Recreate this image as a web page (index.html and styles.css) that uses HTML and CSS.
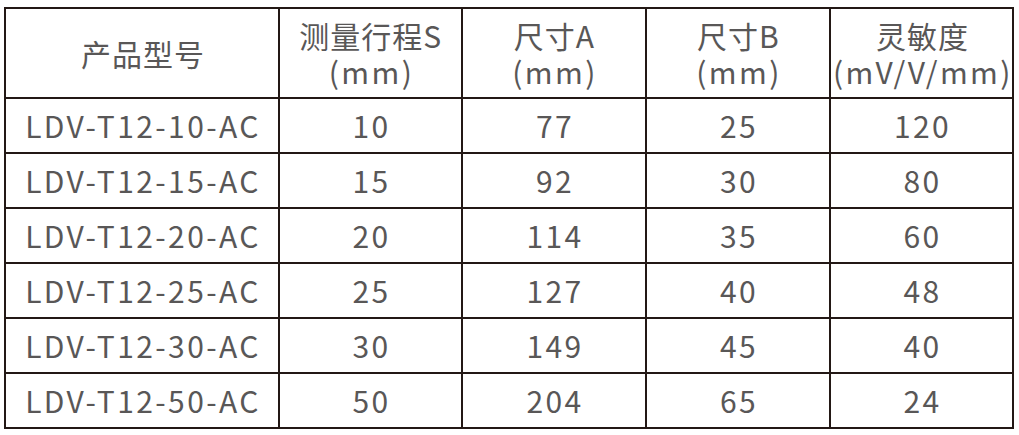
FILE: index.html
```html
<!DOCTYPE html>
<html lang="zh">
<head>
<meta charset="utf-8">
<link rel="stylesheet" href="styles.css">
</head>
<body>
<table class="spec">
  <colgroup>
    <col class="c1"><col class="c2"><col class="c3"><col class="c4"><col class="c5">
  </colgroup>
  <thead>
    <tr>
      <th><span class="cjk">产品型号</span></th>
      <th><span class="cjk">测量行程</span>S<br>(mm)</th>
      <th><span class="cjk">尺寸</span>A<br>(mm)</th>
      <th><span class="cjk">尺寸</span>B<br>(mm)</th>
      <th><span class="cjk">灵敏度</span><br>(mV/V/mm)</th>
    </tr>
  </thead>
  <tbody>
    <tr><td>LDV-T12-10-AC</td><td>10</td><td>77</td><td>25</td><td>120</td></tr>
    <tr><td>LDV-T12-15-AC</td><td>15</td><td>92</td><td>30</td><td>80</td></tr>
    <tr><td>LDV-T12-20-AC</td><td>20</td><td>114</td><td>35</td><td>60</td></tr>
    <tr><td>LDV-T12-25-AC</td><td>25</td><td>127</td><td>40</td><td>48</td></tr>
    <tr><td>LDV-T12-30-AC</td><td>30</td><td>149</td><td>45</td><td>40</td></tr>
    <tr><td>LDV-T12-50-AC</td><td>50</td><td>204</td><td>65</td><td>24</td></tr>
  </tbody>
</table>
</body>
</html>
```
FILE: styles.css
```css
html, body {
  background: #ffffff;
}
body {
  margin: 7px 0 0 4px;
  font-family: "Noto Sans CJK SC", "Noto Sans", sans-serif;
  color: #595757;
}
.spec {
  border-collapse: collapse;
  table-layout: fixed;
  width: 1010px;
}
.c1 { width: 274px; }
.c2 { width: 183px; }
.c3 { width: 184px; }
.c4 { width: 184px; }
.c5 { width: 183px; }
.spec th, .spec td {
  border: 2px solid #231815;
  padding: 0 0 0 2px;
  text-align: center;
  font-size: 30px;
  font-weight: 400;
  letter-spacing: 2.4px;
  white-space: nowrap;
  overflow: visible;
}
.spec th {
  height: 88px;
  line-height: 36px;
}
.spec td {
  height: 53px;
  line-height: 53px;
}
.cjk {
  letter-spacing: 1px;
}
```
